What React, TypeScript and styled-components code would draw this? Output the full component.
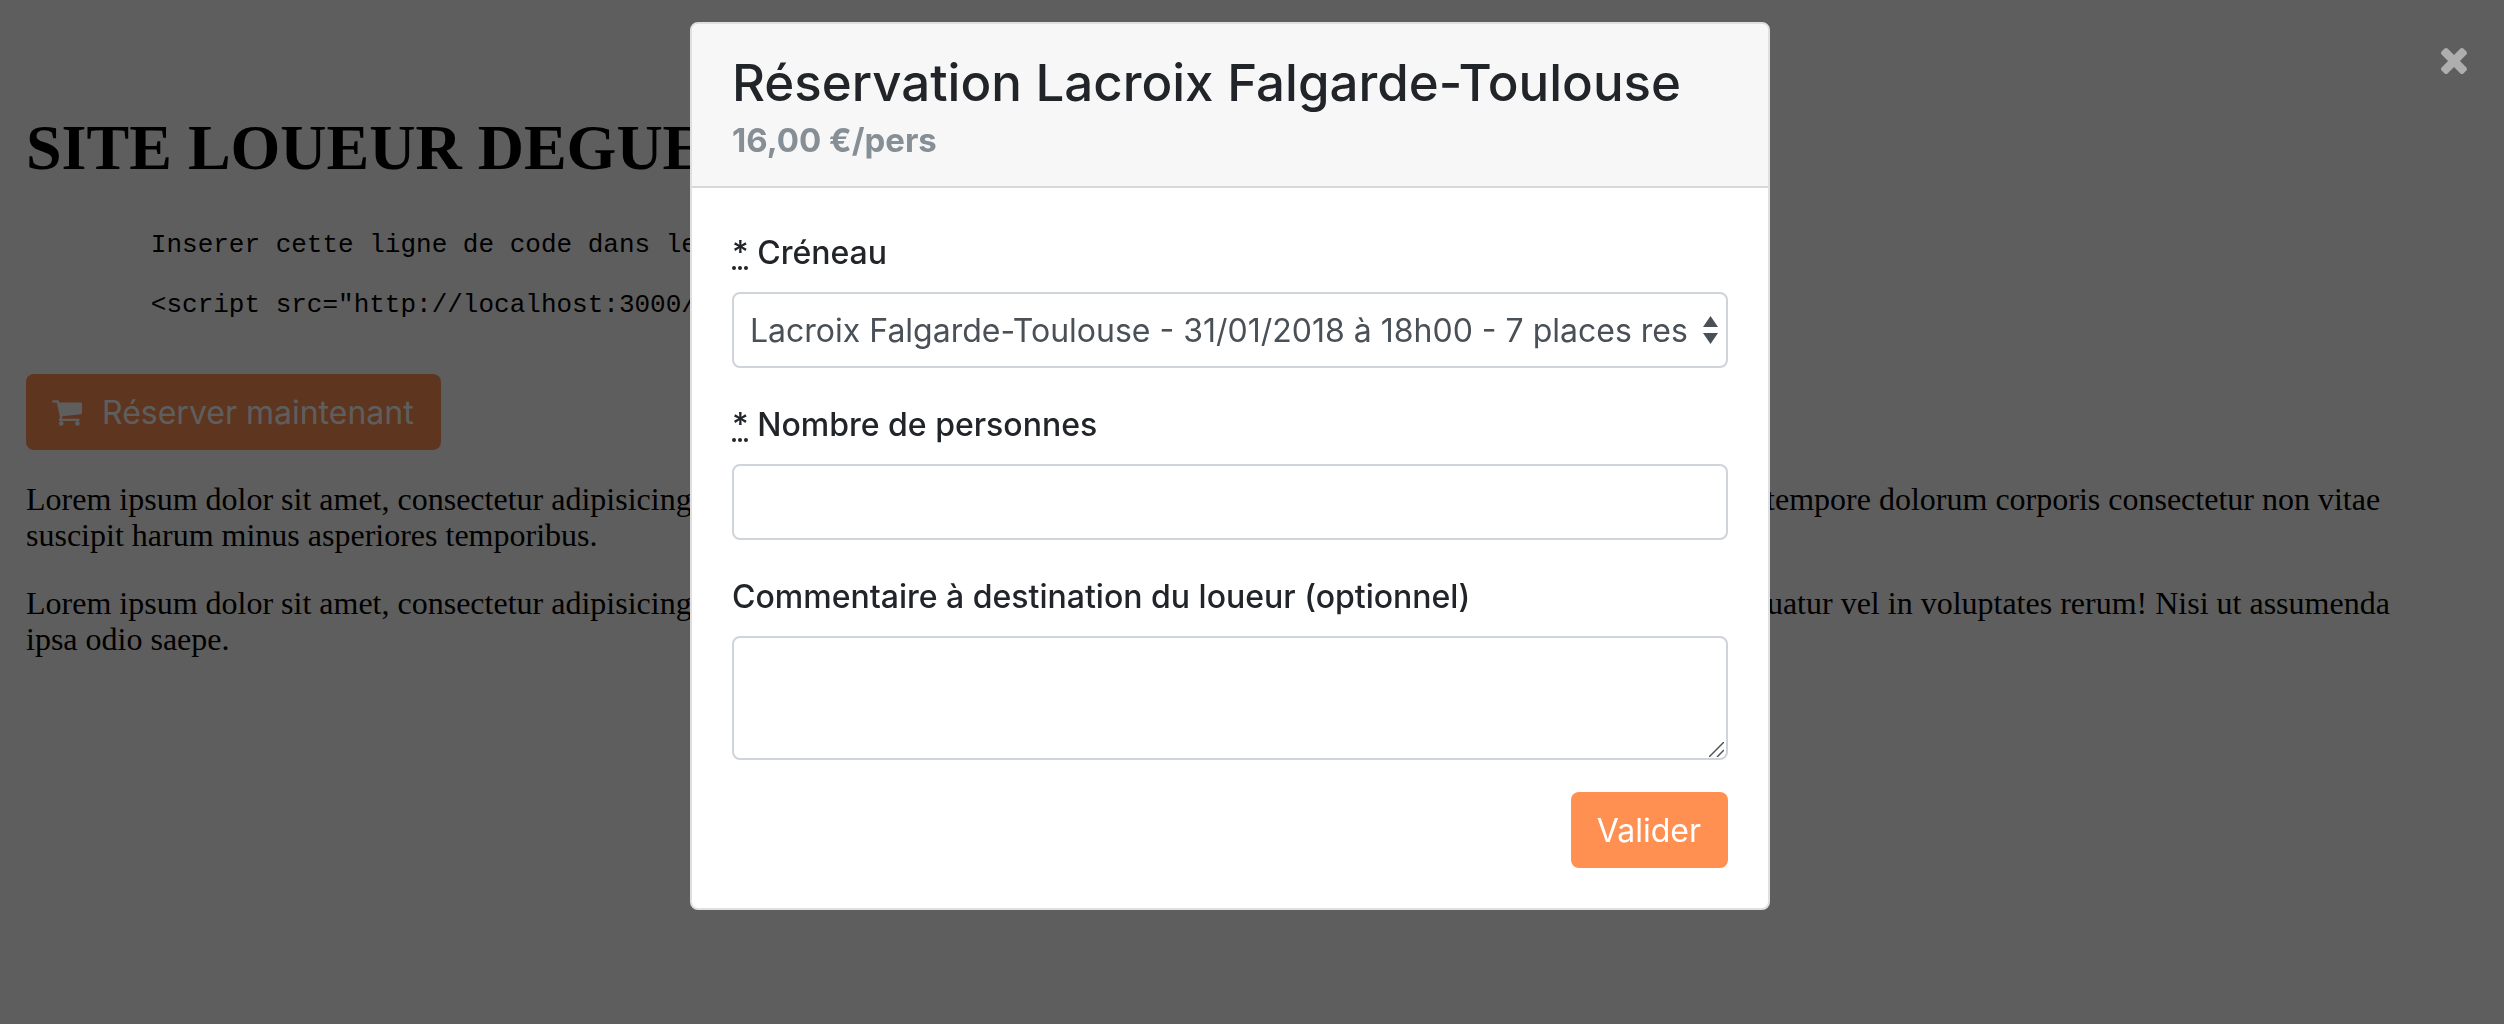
import React from 'react';
import styled, { createGlobalStyle } from 'styled-components';

const sans = '"Inter", "Liberation Sans", sans-serif';
const serif = '"Liberation Serif", serif';
const mono = '"Liberation Mono", monospace';

const GlobalStyle = createGlobalStyle`
  *, *::before, *::after { box-sizing: border-box; }
  body { margin: 0; background: #fff; }
`;

const Page = styled.main`
  min-height: 100vh;
  padding: 112px 80px 32px 26px;
  color: #000;
  font-family: ${serif};
  font-size: 32px;
  line-height: 36px;
`;

const SiteTitle = styled.h1`
  margin: 0 0 46px;
  font-size: 64px;
  line-height: 72px;
`;

const Snippet = styled.pre`
  margin: 0 0 54px;
  font-family: ${mono};
  font-size: 26px;
  line-height: 30px;
`;

const Paragraph = styled.p`
  margin: 0 0 32px;
`;

const Button = styled.button`
  display: inline-flex;
  align-items: center;
  gap: 20px;
  height: 76px;
  padding: 2px 27px 0 26px;
  border: 0;
  border-radius: 8px;
  background: #ff9052;
  color: #fff;
  font-family: ${sans};
  font-size: 32px;
  line-height: 48px;
  cursor: pointer;
`;

const BookingBar = styled.div`
  display: flex;
  margin-bottom: 31px;
`;

const Backdrop = styled.div`
  position: fixed;
  inset: 0;
  display: flex;
  align-items: flex-start;
  justify-content: center;
  padding: 22px 44px 22px 0;
  overflow: auto;
  background: rgba(0, 0, 0, 0.63);
`;

const CloseButton = styled.button`
  position: absolute;
  top: 36px;
  right: 25px;
  display: flex;
  padding: 12px;
  border: 0;
  background: transparent;
  color: #aeaeae;
  cursor: pointer;
`;

const Dialog = styled.section`
  width: 100%;
  max-width: 1080px;
  border: 2px solid #dfdfdf;
  border-radius: 8px;
  overflow: hidden;
  background: #fff;
  color: #212529;
  font-family: ${sans};
  font-size: 32px;
  line-height: 48px;
`;

const DialogHeader = styled.header`
  padding: 26px 40px 22px;
  border-bottom: 2px solid #d8d8d8;
  background: #f7f7f7;
`;

const DialogTitle = styled.h2`
  margin: 0;
  font-size: 51px;
  font-weight: 500;
  line-height: 66px;
`;

const Price = styled.p`
  margin: 0;
  color: #868e96;
  font-size: 33px;
  font-weight: 700;
`;

const Form = styled.form`
  display: flex;
  flex-direction: column;
  gap: 32px;
  padding: 41px 40px 40px;
`;

const Field = styled.div`
  display: flex;
  flex-direction: column;
  gap: 15px;

  & + & {
    padding-top: 1px;
  }
`;

const Label = styled.label`
  font-weight: 500;
`;

const Required = styled.abbr`
  text-decoration: underline dotted;
  text-decoration-thickness: 4px;
  text-underline-offset: 2px;
  text-decoration-skip-ink: none;
`;

const ControlBox = styled.div`
  position: relative;
  display: flex;
`;

const controlStyle = `
  width: 100%;
  height: 76px;
  margin: 0;
  padding: 13px 16px 11px;
  border: 2px solid #ced4da;
  border-radius: 8px;
  background: #fff;
  color: #495057;
  font-family: ${sans};
  font-size: 32px;
  line-height: 48px;
`;

const Select = styled.select`
  ${controlStyle}
  padding-right: 38px;
  appearance: none;
`;

const Input = styled.input`
  ${controlStyle}
`;

const TextArea = styled.textarea`
  ${controlStyle}
  height: 124px;
  resize: none;
`;

const SelectArrows = styled.svg`
  position: absolute;
  top: 24px;
  right: 10px;
  pointer-events: none;
`;

const Grip = styled.svg`
  position: absolute;
  right: 4px;
  bottom: 3px;
  pointer-events: none;
`;

const Actions = styled.div`
  display: flex;
  justify-content: flex-end;
`;

const CartIcon = () => (
  <svg width="30" height="26" viewBox="64 256 1664 1408" fill="currentColor" aria-hidden="true">
    <path d="M704 1536q0 52-38 90t-90 38-90-38-38-90 38-90 90-38 90 38 38 90zm896 0q0 52-38 90t-90 38-90-38-38-90 38-90 90-38 90 38 38 90zm128-1088v512q0 24-16.500 42.500t-40.500 21.500l-1044 122q13 60 13 70 0 16-24 64h920q26 0 45 19t19 45-19 45-45 19h-1024q-26 0-45-19t-19-45q0-11 8-31.500t16-36 21.500-40 15.500-29.500l-177-823h-204q-26 0-45-19t-19-45 19-45 45-19h256q16 0 28.500 6.500t19.500 15.500 13 24.500 8 26 5.500 29.500 4.500 26h1201q26 0 45 19t19 45z" />
  </svg>
);

const CloseIcon = () => (
  <svg width="26" height="26" viewBox="302 366 1188 1188" fill="currentColor" aria-hidden="true">
    <path d="M1490 1322q0 40-28 68l-136 136q-28 28-68 28t-68-28l-294-294-294 294q-28 28-68 28t-68-28l-136-136q-28-28-28-68t28-68l294-294-294-294q-28-28-28-68t28-68l136-136q28-28 68-28t68 28l294 294 294-294q28-28 68-28t68 28l136 136q28 28 28 68t-28 68l-294 294 294 294q28 28 28 68z" />
  </svg>
);

const snippet = `        Inserer cette ligne de code dans le site du loueur

        <script src="http://localhost:3000/widget.js"></script>`;

export default function App() {
  return (
    <>
      <GlobalStyle />
      <Page>
        <SiteTitle>SITE LOUEUR DEGUEULASSE</SiteTitle>
        <Snippet>{snippet}</Snippet>
        <BookingBar>
          <Button type="button">
            <CartIcon />
            Réserver maintenant
          </Button>
        </BookingBar>
        <Paragraph>
          Lorem ipsum dolor sit amet, consectetur adipisicing elit. Modi quibusdam laborum excepturi
          voluptates, quisquam eligendi dolore quis tempore dolorum corporis consectetur non vitae
          suscipit harum minus asperiores temporibus.
        </Paragraph>
        <Paragraph>
          Lorem ipsum dolor sit amet, consectetur adipisicing elit. Dolorem fugiat nesciunt ducimus,
          perspiciatis a harum ab molestiae est consequatur vel in voluptates rerum! Nisi ut
          assumenda ipsa odio saepe.
        </Paragraph>
      </Page>
      <Backdrop>
        <Dialog role="dialog" aria-modal="true" aria-labelledby="dialog-title">
          <DialogHeader>
            <DialogTitle id="dialog-title">Réservation Lacroix Falgarde-Toulouse</DialogTitle>
            <Price>16,00 €/pers</Price>
          </DialogHeader>
          <Form onSubmit={(event) => event.preventDefault()}>
            <Field>
              <Label htmlFor="slot">
                <Required>*</Required> Créneau
              </Label>
              <ControlBox>
                <Select id="slot" required>
                  <option>
                    Lacroix Falgarde-Toulouse - 31/01/2018 à 18h00 - 7 places restantes
                  </option>
                </Select>
                <SelectArrows width="15" height="28" viewBox="0 0 15 28" fill="#495057" aria-hidden="true">
                  <path d="M7.500 0 15 11H0zM0 17h15L7.500 28z" />
                </SelectArrows>
              </ControlBox>
            </Field>
            <Field>
              <Label htmlFor="people">
                <Required>*</Required> Nombre de personnes
              </Label>
              <Input id="people" type="text" inputMode="numeric" required />
            </Field>
            <Field>
              <Label htmlFor="comment">Commentaire à destination du loueur (optionnel)</Label>
              <ControlBox>
                <TextArea id="comment" />
                <Grip width="15" height="15" viewBox="0 0 15 15" stroke="#555" strokeWidth="1.500" aria-hidden="true">
                  <path d="M0 15 15 0M8 15l7-7" />
                </Grip>
              </ControlBox>
            </Field>
            <Actions>
              <Button type="submit">Valider</Button>
            </Actions>
          </Form>
        </Dialog>
        <CloseButton type="button" aria-label="Fermer">
          <CloseIcon />
        </CloseButton>
      </Backdrop>
    </>
  );
}
